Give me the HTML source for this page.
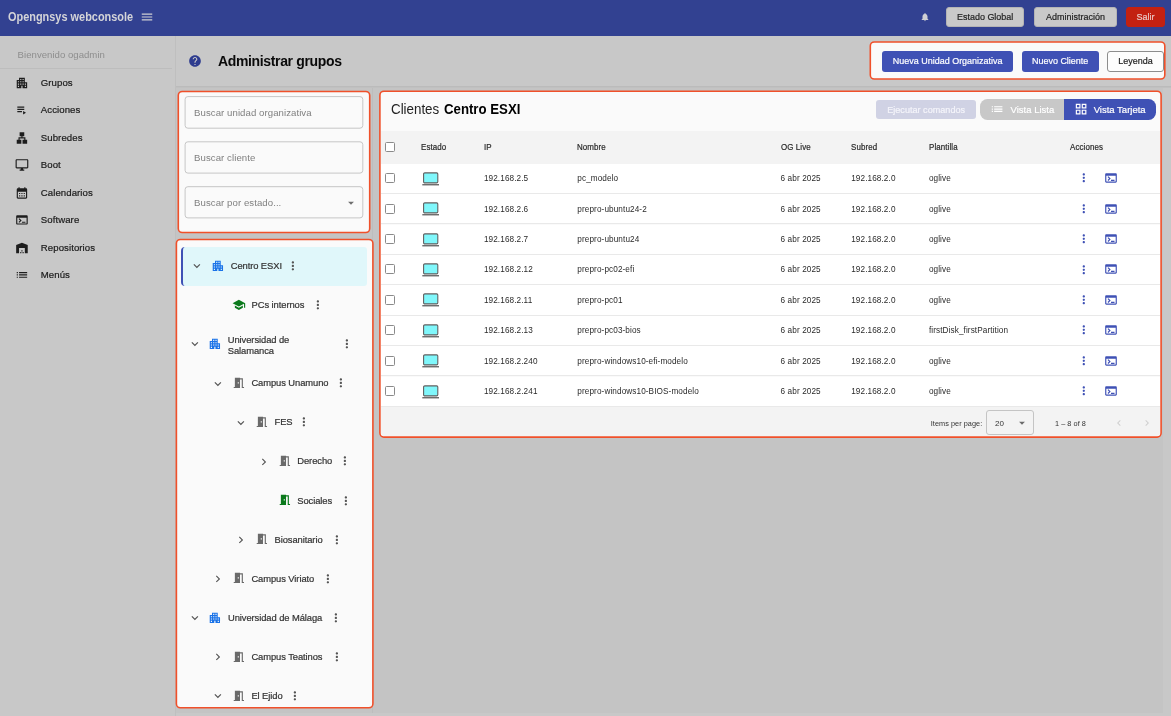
<!DOCTYPE html>
<html lang="es">
<head>
<meta charset="utf-8">
<title>Opengnsys webconsole</title>
<style>
*{box-sizing:border-box;margin:0;padding:0}
html,body{width:1171px;height:716px;overflow:hidden}
body{background:#c8c8c8;font-family:"Liberation Sans",sans-serif;color:#222;position:relative}
.abs{position:absolute}
svg{display:block;position:absolute}
.t{position:absolute;white-space:nowrap;line-height:1}
#hdr,#side,#main{will-change:transform}
#main{position:absolute;left:0;top:0;width:1171px;height:716px}
/* header */
#hdr{position:absolute;left:0;top:0;width:1171px;height:36px;background:#324191}
#hdr .title{left:8px;top:10.6px;font-size:12.4px;font-weight:bold;color:#d4d4d8;transform:scaleX(.882);transform-origin:0 50%}
.hbtn{position:absolute;top:7px;height:20px;border-radius:3px;background:#c9c9c9;border:1px solid #b4b4b4;color:#1e1e1e;font-size:9.6px;line-height:18px;text-align:center;white-space:nowrap}
.sq{display:inline-block;transform:scaleX(.935);-webkit-text-stroke:.2px currentColor}
/* sidebar */
#side{position:absolute;left:0;top:36px;width:176px;height:680px;background:#c8c8c8;border-right:1px solid #bfbfbf}
#side .welcome{left:17.6px;top:13.6px;font-size:9.6px;color:#8e8e8e;letter-spacing:.02px}
#side .div{position:absolute;left:0;top:32px;width:172px;height:1px;background:#bdbdbd}
#side .it{left:40.8px;font-size:9.6px;color:#1b1b1b;letter-spacing:.08px;-webkit-text-stroke:.2px #1b1b1b}
/* main */
.hl{position:absolute;border-radius:3px;overflow:hidden}
.pbtn{position:absolute;height:21px;border-radius:3px;background:#3f51b5;color:#fff;font-size:9.6px;line-height:20px;text-align:center;white-space:nowrap}
.ph{font-size:9.6px;color:#808080;letter-spacing:.07px}
/* tree */
.tr{position:absolute;font-size:9.4px;color:#333;line-height:10px;white-space:nowrap;letter-spacing:-.08px;-webkit-text-stroke:.2px #333}
/* table */
.row{position:absolute;left:0;width:780px;height:30.4px;background:#fff;border-bottom:1px solid #e9e9e9;font-size:8.2px;color:#2a2a2a}
.row span,.hrow span{position:absolute;top:11.5px;line-height:1;white-space:nowrap;letter-spacing:.1px}
.hrow span{-webkit-text-stroke:.2px #2a2a2a;transform:scaleX(.97);transform-origin:0 50%}
.hrow{position:absolute;left:0;top:39.1px;width:780px;height:32.6px;background:#f3f3f3;font-size:8.2px;color:#2a2a2a}
.cb{position:absolute;left:4px;width:10px;height:10px;border:1px solid #8a8a8a;border-radius:1.5px;background:#fff}
#tbl span,#tbl svg,#tbl>.t,#tbl>.abs,#tbl .pg>*{margin-left:.5px}
#tbl>.pg{margin-left:0}
</style>
</head>
<body>
<div id="hdr">
  <div class="t title">Opengnsys webconsole</div>
  <svg style="left:140px;top:10.2px" width="14" height="14" viewBox="0 0 24 24" fill="#d0d0d4"><path d="M3 18h18v-2H3v2zm0-5h18v-2H3v2zm0-7v2h18V6H3z"/></svg>
  <svg style="left:919.5px;top:11.7px" width="10" height="10" viewBox="0 0 24 24" fill="#d0d0d4"><path d="M12 22c1.1 0 2-.9 2-2h-4c0 1.1.89 2 2 2zm6-6v-5c0-3.07-1.64-5.64-4.5-6.32V4c0-.83-.67-1.5-1.5-1.5s-1.5.67-1.5 1.5v.68C7.63 5.36 6 7.92 6 11v5l-2 2v1h16v-1l-2-2z"/></svg>
  <div class="hbtn" style="left:946px;width:78px"><span class="sq">Estado Global</span></div>
  <div class="hbtn" style="left:1033.5px;width:83px"><span class="sq">Administración</span></div>
  <div class="hbtn" style="left:1126px;width:39px;background:#c32111;border-color:#c32111;color:#e9c9c6"><span class="sq">Salir</span></div>
</div>

<div id="side">
  <div class="t welcome">Bienvenido ogadmin</div>
  <div class="div"></div>
  <svg style="left:15.1px;top:39.5px" width="13.9" height="13.9" viewBox="0 0 24 24" fill="#1d1d1d"><path d="M17 11V3H7v4H3v14h8v-4h2v4h8V11h-4zM7 19H5v-2h2v2zm0-4H5v-2h2v2zm0-4H5V9h2v2zm4 4H9v-2h2v2zm0-4H9V9h2v2zm0-4H9V5h2v2zm4 8h-2v-2h2v2zm0-4h-2V9h2v2zm0-4h-2V5h2v2zm4 12h-2v-2h2v2zm0-4h-2v-2h2v2z"/></svg>
  <div class="t it" style="top:41.5px">Grupos</div>
  <svg style="left:15.1px;top:67.0px" width="13.9" height="13.9" viewBox="0 0 24 24" fill="#1d1d1d"><path d="M4 10h12v2H4zm0-4h12v2H4zm0 8h8v2H4zm10 0v6l5-3z"/></svg>
  <div class="t it" style="top:69.0px">Acciones</div>
  <svg style="left:15.1px;top:94.6px" width="13.9" height="13.9" viewBox="0 0 24 24" fill="#1d1d1d"><path d="M13 22h8v-7h-3v-4h-5V9h3V2H8v7h3v2H6v4H3v7h8v-7H8v-2h8v2h-3z"/></svg>
  <div class="t it" style="top:96.6px">Subredes</div>
  <svg style="left:15.1px;top:122.2px" width="13.9" height="13.9" viewBox="0 0 24 24" fill="#1d1d1d"><path d="M21 2H3c-1.1 0-2 .9-2 2v12c0 1.1.9 2 2 2h7v2H8v2h8v-2h-2v-2h7c1.1 0 2-.9 2-2V4c0-1.1-.9-2-2-2zm0 14H3V4h18v12z"/></svg>
  <div class="t it" style="top:124.2px">Boot</div>
  <svg style="left:15.1px;top:149.7px" width="13.9" height="13.9" viewBox="0 0 24 24" fill="#1d1d1d"><path d="M19 4h-1V2h-2v2H8V2H6v2H5c-1.11 0-1.99.9-1.99 2L3 20c0 1.1.89 2 2 2h14c1.1 0 2-.9 2-2V6c0-1.1-.9-2-2-2zm0 16H5V10h14v10zM9 14H7v-2h2v2zm4 0h-2v-2h2v2zm4 0h-2v-2h2v2zm-8 4H7v-2h2v2zm4 0h-2v-2h2v2zm4 0h-2v-2h2v2z"/></svg>
  <div class="t it" style="top:151.7px">Calendarios</div>
  <svg style="left:15.1px;top:177.2px" width="13.9" height="13.9" viewBox="0 0 24 24" fill="#1d1d1d"><path d="M20 4H4c-1.11 0-2 .9-2 2v12c0 1.1.89 2 2 2h16c1.1 0 2-.9 2-2V6c0-1.1-.89-2-2-2zm0 14H4V8h16v10zm-2-1h-6v-2h6v2zM7.5 17l-1.41-1.41L8.67 13l-2.59-2.59L7.5 9l4 4-4 4z"/></svg>
  <div class="t it" style="top:179.2px">Software</div>
  <svg style="left:15.1px;top:204.8px" width="13.9" height="13.9" viewBox="0 0 24 24" fill="#1d1d1d"><path d="M22 21V7L12 3 2 7v14h5v-9h10v9h5zm-11-2H9v2h2v-2zm2-3h-2v2h2v-2zm2 3h-2v2h2v-2z"/></svg>
  <div class="t it" style="top:206.8px">Repositorios</div>
  <svg style="left:15.1px;top:232.4px" width="13.9" height="13.9" viewBox="0 0 24 24" fill="#1d1d1d"><path d="M3 13h2v-2H3v2zm0 4h2v-2H3v2zm0-8h2V7H3v2zm4 4h14v-2H7v2zm0 4h14v-2H7v2zM7 7v2h14V7H7z"/></svg>
  <div class="t it" style="top:234.4px">Menús</div>
</div>

<div id="main">
  <div class="abs" style="left:176px;top:87px;width:987px;height:629px;background:#c4c4c4"></div>
  <div class="abs" style="left:176px;top:713px;width:995px;height:3px;background:#c8c8c8"></div>
  <div class="abs" style="left:372px;top:87px;width:1px;height:626px;background:#bdbdbd"></div>
  <svg style="left:0;top:0" width="1171" height="716" viewBox="0 0 1171 716"><rect x="870.3" y="42.0" width="294.5" height="37.0" rx="4" fill="#fafafa" stroke="#f0502a" stroke-width="1.6"/><rect x="178.3" y="91.5" width="191.4" height="141.0" rx="4" fill="#fafafa" stroke="#f0502a" stroke-width="1.6"/><rect x="176.4" y="239.5" width="196.5" height="468.3" rx="4" fill="#fafafa" stroke="#f0502a" stroke-width="1.6"/><rect x="379.9" y="91.2" width="781.2" height="345.9" rx="4" fill="#fafafa" stroke="#f0502a" stroke-width="1.6"/><rect x="185.1" y="96.6" width="177.7" height="31.6" rx="2.8" fill="#fafafa" stroke="#c6c6c6" stroke-width="1"/><rect x="185.1" y="141.8" width="177.7" height="31.3" rx="2.8" fill="#fafafa" stroke="#c6c6c6" stroke-width="1"/><rect x="185.1" y="186.7" width="177.7" height="31.2" rx="2.8" fill="#fafafa" stroke="#c6c6c6" stroke-width="1"/></svg>
  <!-- page header -->
  <svg style="left:188px;top:54px" width="14" height="14" viewBox="0 0 24 24" fill="#2e3c8f"><path d="M12 2C6.48 2 2 6.48 2 12s4.480 10 10 10 10-4.480 10-10S17.520 2 12 2zm1 17h-2v-2h2v2zm2.070-7.750l-.9.920C13.450 12.900 13 13.500 13 15h-2v-.5c0-1.100.450-2.100 1.170-2.830l1.240-1.260c.370-.360.590-.860.590-1.410 0-1.100-.9-2-2-2s-2 .9-2 2H8c0-2.210 1.790-4 4-4s4 1.790 4 4c0 .880-.360 1.680-.930 2.250z"/></svg>
  <div class="t" style="left:218px;top:54px;font-size:14px;font-weight:bold;color:#0a0a0a;letter-spacing:-.35px">Administrar grupos</div>
  <div class="abs" style="left:176px;top:86px;width:995px;height:1px;background:#bbb"></div><div class="abs" style="left:176px;top:87px;width:995px;height:1px;background:#c0c0c0"></div>

  <!-- top-right actions -->
  <div class="hl" style="left:871px;top:43px;width:293px;height:35px">
    <div class="pbtn" style="left:11px;top:8px;width:131px"><span class="sq">Nueva Unidad Organizativa</span></div>
    <div class="pbtn" style="left:151px;top:8px;width:77px"><span class="sq">Nuevo Cliente</span></div>
    <div class="pbtn" style="left:236px;top:8px;width:57px;background:#fdfdfd;border:1px solid #8d8d8d;color:#222;line-height:18px"><span class="sq">Leyenda</span></div>
  </div>

  <!-- search box -->
  <div class="t ph" style="left:194.1px;top:107.7px">Buscar unidad organizativa</div>
  <div class="t ph" style="left:194.1px;top:152.8px">Buscar cliente</div>
  <div class="t ph" style="left:194.1px;top:197.7px">Buscar por estado...</div>
  <svg style="left:344px;top:195.5px" width="14" height="14" viewBox="0 0 24 24" fill="#6e6e6e"><path d="M7 10l5 5 5-5z"/></svg>

  <!-- tree -->
  <div class="hl" id="tree" style="left:178px;top:240px;width:194px;height:467px">
    <div class="abs" style="left:3.2px;top:6.6px;width:185.4px;height:39.2px;background:#e0f7fa;border-left:2px solid #3f51b5;border-radius:4px 3px 3px 4px"></div>
    <svg style="left:12.4px;top:19.3px" width="13.75" height="13.75" viewBox="0 0 24 24" fill="#555"><path d="M16.59 8.59 12 13.17 7.41 8.59 6 10l6 6 6-6z"/></svg>
    <svg style="left:32.9px;top:18.9px" width="13.75" height="13.75" viewBox="0 0 24 24" fill="#1a73e8"><path d="M17 11V3H7v4H3v14h8v-4h2v4h8V11h-4zM7 19H5v-2h2v2zm0-4H5v-2h2v2zm0-4H5V9h2v2zm4 4H9v-2h2v2zm0-4H9V9h2v2zm0-4H9V5h2v2zm4 8h-2v-2h2v2zm0-4h-2V9h2v2zm0-4h-2V5h2v2zm4 12h-2v-2h2v2zm0-4h-2v-2h2v2z"/></svg>
    <div class="tr" style="left:52.7px;top:21.1px;">Centro ESXI</div>
    <svg style="left:108.4px;top:19.1px" width="13.75" height="13.75" viewBox="0 0 24 24" fill="#555"><path d="M12 8c1.100 0 2-.9 2-2s-.9-2-2-2-2 .9-2 2 .9 2 2 2zm0 2c-1.100 0-2 .9-2 2s.9 2 2 2 2-.9 2-2-.9-2-2-2zm0 6c-1.100 0-2 .9-2 2s.9 2 2 2 2-.9 2-2-.9-2-2-2z"/></svg>
    <svg style="left:53.9px;top:58.0px" width="13.75" height="13.75" viewBox="0 0 24 24" fill="#0b7a1c"><path d="M5 13.18v4L12 21l7-3.82v-4L12 17l-7-3.820zM12 3 1 9l11 6 9-4.910V17h2V9L12 3z"/></svg>
    <div class="tr" style="left:73.6px;top:60.2px;">PCs internos</div>
    <svg style="left:133.0px;top:58.2px" width="13.75" height="13.75" viewBox="0 0 24 24" fill="#555"><path d="M12 8c1.100 0 2-.9 2-2s-.9-2-2-2-2 .9-2 2 .9 2 2 2zm0 2c-1.100 0-2 .9-2 2s.9 2 2 2 2-.9 2-2-.9-2-2-2zm0 6c-1.100 0-2 .9-2 2s.9 2 2 2 2-.9 2-2-.9-2-2-2z"/></svg>
    <svg style="left:9.8px;top:97.4px" width="13.75" height="13.75" viewBox="0 0 24 24" fill="#555"><path d="M16.59 8.59 12 13.17 7.41 8.59 6 10l6 6 6-6z"/></svg>
    <svg style="left:30.2px;top:97.0px" width="13.75" height="13.75" viewBox="0 0 24 24" fill="#1a73e8"><path d="M17 11V3H7v4H3v14h8v-4h2v4h8V11h-4zM7 19H5v-2h2v2zm0-4H5v-2h2v2zm0-4H5V9h2v2zm4 4H9v-2h2v2zm0-4H9V9h2v2zm0-4H9V5h2v2zm4 8h-2v-2h2v2zm0-4h-2V9h2v2zm0-4h-2V5h2v2zm4 12h-2v-2h2v2zm0-4h-2v-2h2v2z"/></svg>
    <div class="tr" style="left:49.8px;top:93.6px;line-height:11px;">Universidad de<br>Salamanca</div>
    <svg style="left:161.8px;top:97.2px" width="13.75" height="13.75" viewBox="0 0 24 24" fill="#555"><path d="M12 8c1.100 0 2-.9 2-2s-.9-2-2-2-2 .9-2 2 .9 2 2 2zm0 2c-1.100 0-2 .9-2 2s.9 2 2 2 2-.9 2-2-.9-2-2-2zm0 6c-1.100 0-2 .9-2 2s.9 2 2 2 2-.9 2-2-.9-2-2-2z"/></svg>
    <svg style="left:33.1px;top:136.5px" width="13.75" height="13.75" viewBox="0 0 24 24" fill="#555"><path d="M16.59 8.59 12 13.17 7.41 8.59 6 10l6 6 6-6z"/></svg>
    <svg style="left:53.9px;top:136.1px" width="13.75" height="13.75" viewBox="0 0 24 24" fill="#6a6a6a"><path d="M14 6v15H3v-2h2V3h9v1h5v15h2v2h-4V6h-3zm-4 5v2h2v-2h-2z"/></svg>
    <div class="tr" style="left:73.4px;top:138.3px;">Campus Unamuno</div>
    <svg style="left:155.8px;top:136.3px" width="13.75" height="13.75" viewBox="0 0 24 24" fill="#555"><path d="M12 8c1.100 0 2-.9 2-2s-.9-2-2-2-2 .9-2 2 .9 2 2 2zm0 2c-1.100 0-2 .9-2 2s.9 2 2 2 2-.9 2-2-.9-2-2-2zm0 6c-1.100 0-2 .9-2 2s.9 2 2 2 2-.9 2-2-.9-2-2-2z"/></svg>
    <svg style="left:56.1px;top:175.6px" width="13.75" height="13.75" viewBox="0 0 24 24" fill="#555"><path d="M16.59 8.59 12 13.17 7.41 8.59 6 10l6 6 6-6z"/></svg>
    <svg style="left:77.0px;top:175.2px" width="13.75" height="13.75" viewBox="0 0 24 24" fill="#6a6a6a"><path d="M14 6v15H3v-2h2V3h9v1h5v15h2v2h-4V6h-3zm-4 5v2h2v-2h-2z"/></svg>
    <div class="tr" style="left:96.5px;top:177.3px;">FES</div>
    <svg style="left:118.8px;top:175.4px" width="13.75" height="13.75" viewBox="0 0 24 24" fill="#555"><path d="M12 8c1.100 0 2-.9 2-2s-.9-2-2-2-2 .9-2 2 .9 2 2 2zm0 2c-1.100 0-2 .9-2 2s.9 2 2 2 2-.9 2-2-.9-2-2-2zm0 6c-1.100 0-2 .9-2 2s.9 2 2 2 2-.9 2-2-.9-2-2-2z"/></svg>
    <svg style="left:79.1px;top:214.6px" width="13.75" height="13.75" viewBox="0 0 24 24" fill="#555"><path d="M10 6 8.59 7.41 13.17 12l-4.58 4.59L10 18l6-6z"/></svg>
    <svg style="left:100.1px;top:214.2px" width="13.75" height="13.75" viewBox="0 0 24 24" fill="#6a6a6a"><path d="M14 6v15H3v-2h2V3h9v1h5v15h2v2h-4V6h-3zm-4 5v2h2v-2h-2z"/></svg>
    <div class="tr" style="left:119.3px;top:216.4px;">Derecho</div>
    <svg style="left:160.1px;top:214.4px" width="13.75" height="13.75" viewBox="0 0 24 24" fill="#555"><path d="M12 8c1.100 0 2-.9 2-2s-.9-2-2-2-2 .9-2 2 .9 2 2 2zm0 2c-1.100 0-2 .9-2 2s.9 2 2 2 2-.9 2-2-.9-2-2-2zm0 6c-1.100 0-2 .9-2 2s.9 2 2 2 2-.9 2-2-.9-2-2-2z"/></svg>
    <svg style="left:100.1px;top:253.3px" width="13.75" height="13.75" viewBox="0 0 24 24" fill="#0b7a1c"><path d="M14 6v15H3v-2h2V3h9v1h5v15h2v2h-4V6h-3zm-4 5v2h2v-2h-2z"/></svg>
    <div class="tr" style="left:119.3px;top:255.5px;">Sociales</div>
    <svg style="left:161.1px;top:253.5px" width="13.75" height="13.75" viewBox="0 0 24 24" fill="#555"><path d="M12 8c1.100 0 2-.9 2-2s-.9-2-2-2-2 .9-2 2 .9 2 2 2zm0 2c-1.100 0-2 .9-2 2s.9 2 2 2 2-.9 2-2-.9-2-2-2zm0 6c-1.100 0-2 .9-2 2s.9 2 2 2 2-.9 2-2-.9-2-2-2z"/></svg>
    <svg style="left:56.1px;top:292.7px" width="13.75" height="13.75" viewBox="0 0 24 24" fill="#555"><path d="M10 6 8.59 7.41 13.17 12l-4.58 4.59L10 18l6-6z"/></svg>
    <svg style="left:77.0px;top:292.3px" width="13.75" height="13.75" viewBox="0 0 24 24" fill="#6a6a6a"><path d="M14 6v15H3v-2h2V3h9v1h5v15h2v2h-4V6h-3zm-4 5v2h2v-2h-2z"/></svg>
    <div class="tr" style="left:96.5px;top:294.5px;">Biosanitario</div>
    <svg style="left:152.1px;top:292.5px" width="13.75" height="13.75" viewBox="0 0 24 24" fill="#555"><path d="M12 8c1.100 0 2-.9 2-2s-.9-2-2-2-2 .9-2 2 .9 2 2 2zm0 2c-1.100 0-2 .9-2 2s.9 2 2 2 2-.9 2-2-.9-2-2-2zm0 6c-1.100 0-2 .9-2 2s.9 2 2 2 2-.9 2-2-.9-2-2-2z"/></svg>
    <svg style="left:33.1px;top:331.8px" width="13.75" height="13.75" viewBox="0 0 24 24" fill="#555"><path d="M10 6 8.59 7.41 13.17 12l-4.58 4.59L10 18l6-6z"/></svg>
    <svg style="left:53.9px;top:331.4px" width="13.75" height="13.75" viewBox="0 0 24 24" fill="#6a6a6a"><path d="M14 6v15H3v-2h2V3h9v1h5v15h2v2h-4V6h-3zm-4 5v2h2v-2h-2z"/></svg>
    <div class="tr" style="left:73.4px;top:333.6px;">Campus Viriato</div>
    <svg style="left:143.1px;top:331.6px" width="13.75" height="13.75" viewBox="0 0 24 24" fill="#555"><path d="M12 8c1.100 0 2-.9 2-2s-.9-2-2-2-2 .9-2 2 .9 2 2 2zm0 2c-1.100 0-2 .9-2 2s.9 2 2 2 2-.9 2-2-.9-2-2-2zm0 6c-1.100 0-2 .9-2 2s.9 2 2 2 2-.9 2-2-.9-2-2-2z"/></svg>
    <svg style="left:9.8px;top:370.9px" width="13.75" height="13.75" viewBox="0 0 24 24" fill="#555"><path d="M16.59 8.59 12 13.17 7.41 8.59 6 10l6 6 6-6z"/></svg>
    <svg style="left:30.2px;top:370.5px" width="13.75" height="13.75" viewBox="0 0 24 24" fill="#1a73e8"><path d="M17 11V3H7v4H3v14h8v-4h2v4h8V11h-4zM7 19H5v-2h2v2zm0-4H5v-2h2v2zm0-4H5V9h2v2zm4 4H9v-2h2v2zm0-4H9V9h2v2zm0-4H9V5h2v2zm4 8h-2v-2h2v2zm0-4h-2V9h2v2zm0-4h-2V5h2v2zm4 12h-2v-2h2v2zm0-4h-2v-2h2v2z"/></svg>
    <div class="tr" style="left:50.0px;top:372.6px;">Universidad de Málaga</div>
    <svg style="left:151.1px;top:370.7px" width="13.75" height="13.75" viewBox="0 0 24 24" fill="#555"><path d="M12 8c1.100 0 2-.9 2-2s-.9-2-2-2-2 .9-2 2 .9 2 2 2zm0 2c-1.100 0-2 .9-2 2s.9 2 2 2 2-.9 2-2-.9-2-2-2zm0 6c-1.100 0-2 .9-2 2s.9 2 2 2 2-.9 2-2-.9-2-2-2z"/></svg>
    <svg style="left:33.1px;top:409.9px" width="13.75" height="13.75" viewBox="0 0 24 24" fill="#555"><path d="M10 6 8.59 7.41 13.17 12l-4.58 4.59L10 18l6-6z"/></svg>
    <svg style="left:53.9px;top:409.5px" width="13.75" height="13.75" viewBox="0 0 24 24" fill="#6a6a6a"><path d="M14 6v15H3v-2h2V3h9v1h5v15h2v2h-4V6h-3zm-4 5v2h2v-2h-2z"/></svg>
    <div class="tr" style="left:73.4px;top:411.7px;">Campus Teatinos</div>
    <svg style="left:152.1px;top:409.7px" width="13.75" height="13.75" viewBox="0 0 24 24" fill="#555"><path d="M12 8c1.100 0 2-.9 2-2s-.9-2-2-2-2 .9-2 2 .9 2 2 2zm0 2c-1.100 0-2 .9-2 2s.9 2 2 2 2-.9 2-2-.9-2-2-2zm0 6c-1.100 0-2 .9-2 2s.9 2 2 2 2-.9 2-2-.9-2-2-2z"/></svg>
    <svg style="left:33.1px;top:449.0px" width="13.75" height="13.75" viewBox="0 0 24 24" fill="#555"><path d="M16.59 8.59 12 13.17 7.41 8.59 6 10l6 6 6-6z"/></svg>
    <svg style="left:53.9px;top:448.6px" width="13.75" height="13.75" viewBox="0 0 24 24" fill="#6a6a6a"><path d="M14 6v15H3v-2h2V3h9v1h5v15h2v2h-4V6h-3zm-4 5v2h2v-2h-2z"/></svg>
    <div class="tr" style="left:73.4px;top:450.8px;">El Ejido</div>
    <svg style="left:110.1px;top:448.8px" width="13.75" height="13.75" viewBox="0 0 24 24" fill="#555"><path d="M12 8c1.100 0 2-.9 2-2s-.9-2-2-2-2 .9-2 2 .9 2 2 2zm0 2c-1.100 0-2 .9-2 2s.9 2 2 2 2-.9 2-2-.9-2-2-2zm0 6c-1.100 0-2 .9-2 2s.9 2 2 2 2-.9 2-2-.9-2-2-2z"/></svg>
  </div>

  <!-- clients table -->
  <div class="hl" id="tbl" style="left:381px;top:92px;width:779.3px;height:344.3px">
    <div class="t" style="left:9.2px;top:9.6px;font-size:14px;color:#222;transform:scaleX(.953);transform-origin:0 50%">Clientes</div>
    <div class="t" style="left:62px;top:9.6px;font-size:14px;color:#000;font-weight:bold;transform:scaleX(.944);transform-origin:0 50%">Centro ESXI</div>
    <div class="abs" style="left:494.5px;top:7.6px;width:100px;height:19.8px;border-radius:3px;background:#d0d2e4;color:#f4f4fa;font-size:9.4px;line-height:20.6px;text-align:center"><span class="sq" style="transform:scaleX(.97)">Ejecutar comandos</span></div>
    <div class="abs" style="left:598.8px;top:6.8px;width:84px;height:20.8px;border-radius:7.5px 0 0 7.5px;background:#c8c8c8"></div>
    <div class="abs" style="left:682.5px;top:6.8px;width:91.6px;height:20.8px;border-radius:0 7.5px 7.5px 0;background:#3f51b5"></div>
    <svg style="left:608.9px;top:10.2px" width="14.2" height="14.2" viewBox="0 0 24 24" fill="#fff"><path d="M3 13h2v-2H3v2zm0 4h2v-2H3v2zm0-8h2V7H3v2zm4 4h14v-2H7v2zm0 4h14v-2H7v2zM7 7v2h14V7H7z"/></svg>
    <div class="t" style="left:629.1px;top:12.9px;font-size:9.5px;color:#fff;-webkit-text-stroke:.2px #fff">Vista Lista</div>
    <svg style="left:692.6px;top:9.8px" width="14.2" height="14.2" viewBox="0 0 24 24" fill="#fff"><path d="M3 3v8h8V3H3zm6 6H5V5h4v4zm-6 4v8h8v-8H3zm6 6H5v-4h4v4zm4-16v8h8V3h-8zm6 6h-4V5h4v4zm-6 4v8h8v-8h-8zm6 6h-4v-4h4v4z"/></svg>
    <div class="t" style="left:712.2px;top:12.9px;font-size:9.5px;color:#fff;-webkit-text-stroke:.2px #fff">Vista Tarjeta</div>
    <div class="hrow">
      <div class="cb" style="top:11px"></div>
      <span style="left:39.3px;top:13.1px">Estado</span>
      <span style="left:102.4px;top:13.1px">IP</span>
      <span style="left:195.8px;top:13.1px">Nombre</span>
      <span style="left:399.1px;top:13.1px">OG Live</span>
      <span style="left:469.7px;top:13.1px">Subred</span>
      <span style="left:547.4px;top:13.1px">Plantilla</span>
      <span style="left:688.2px;top:13.1px">Acciones</span>
    </div>
    <div class="row" style="top:71.7px">
      <div class="cb" style="top:9.6px"></div>
      <svg style="left:40.0px;top:8.2px" width="17.5" height="14" viewBox="0 0 17.5 14"><rect x="1.6" y="0.9" width="14.2" height="10" rx="1.2" fill="#80f7fb" stroke="#5f5f5f" stroke-width="1.1"/><rect x="0.3" y="12.1" width="16.8" height="1.3" fill="#5f5f5f"/></svg>
      <span style="left:102.4px">192.168.2.5</span>
      <span style="left:195.8px">pc_modelo</span>
      <span style="left:399.1px">6 abr 2025</span>
      <span style="left:469.7px">192.168.2.0</span>
      <span style="left:547.4px">oglive</span>
      <svg style="left:695.8px;top:7.8px;margin-left:-.3px" width="13.6" height="13.6" viewBox="0 0 24 24" fill="#3f51b5"><path d="M12 8c1.100 0 2-.9 2-2s-.9-2-2-2-2 .9-2 2 .9 2 2 2zm0 2c-1.100 0-2 .9-2 2s.9 2 2 2 2-.9 2-2-.9-2-2-2zm0 6c-1.100 0-2 .9-2 2s.9 2 2 2 2-.9 2-2-.9-2-2-2z"/></svg>
      <svg style="left:722.7px;top:7.5px" width="14" height="14" viewBox="0 0 24 24" fill="#3f51b5"><path d="M20 4H4c-1.110 0-2 .9-2 2v12c0 1.100.890 2 2 2h16c1.100 0 2-.9 2-2V6c0-1.100-.890-2-2-2zm0 14H4V8h16v10zm-2-1h-6v-2h6v2zM7.500 17l-1.410-1.410L8.670 13l-2.590-2.590L7.500 9l4 4-4 4z"/></svg>
    </div>
    <div class="row" style="top:102.1px">
      <div class="cb" style="top:9.6px"></div>
      <svg style="left:40.0px;top:8.2px" width="17.5" height="14" viewBox="0 0 17.5 14"><rect x="1.6" y="0.9" width="14.2" height="10" rx="1.2" fill="#80f7fb" stroke="#5f5f5f" stroke-width="1.1"/><rect x="0.3" y="12.1" width="16.8" height="1.3" fill="#5f5f5f"/></svg>
      <span style="left:102.4px">192.168.2.6</span>
      <span style="left:195.8px">prepro-ubuntu24-2</span>
      <span style="left:399.1px">6 abr 2025</span>
      <span style="left:469.7px">192.168.2.0</span>
      <span style="left:547.4px">oglive</span>
      <svg style="left:695.8px;top:7.8px;margin-left:-.3px" width="13.6" height="13.6" viewBox="0 0 24 24" fill="#3f51b5"><path d="M12 8c1.100 0 2-.9 2-2s-.9-2-2-2-2 .9-2 2 .9 2 2 2zm0 2c-1.100 0-2 .9-2 2s.9 2 2 2 2-.9 2-2-.9-2-2-2zm0 6c-1.100 0-2 .9-2 2s.9 2 2 2 2-.9 2-2-.9-2-2-2z"/></svg>
      <svg style="left:722.7px;top:7.5px" width="14" height="14" viewBox="0 0 24 24" fill="#3f51b5"><path d="M20 4H4c-1.110 0-2 .9-2 2v12c0 1.100.890 2 2 2h16c1.100 0 2-.9 2-2V6c0-1.100-.890-2-2-2zm0 14H4V8h16v10zm-2-1h-6v-2h6v2zM7.500 17l-1.410-1.410L8.670 13l-2.590-2.590L7.500 9l4 4-4 4z"/></svg>
    </div>
    <div class="row" style="top:132.5px">
      <div class="cb" style="top:9.6px"></div>
      <svg style="left:40.0px;top:8.2px" width="17.5" height="14" viewBox="0 0 17.5 14"><rect x="1.6" y="0.9" width="14.2" height="10" rx="1.2" fill="#80f7fb" stroke="#5f5f5f" stroke-width="1.1"/><rect x="0.3" y="12.1" width="16.8" height="1.3" fill="#5f5f5f"/></svg>
      <span style="left:102.4px">192.168.2.7</span>
      <span style="left:195.8px">prepro-ubuntu24</span>
      <span style="left:399.1px">6 abr 2025</span>
      <span style="left:469.7px">192.168.2.0</span>
      <span style="left:547.4px">oglive</span>
      <svg style="left:695.8px;top:7.8px;margin-left:-.3px" width="13.6" height="13.6" viewBox="0 0 24 24" fill="#3f51b5"><path d="M12 8c1.100 0 2-.9 2-2s-.9-2-2-2-2 .9-2 2 .9 2 2 2zm0 2c-1.100 0-2 .9-2 2s.9 2 2 2 2-.9 2-2-.9-2-2-2zm0 6c-1.100 0-2 .9-2 2s.9 2 2 2 2-.9 2-2-.9-2-2-2z"/></svg>
      <svg style="left:722.7px;top:7.5px" width="14" height="14" viewBox="0 0 24 24" fill="#3f51b5"><path d="M20 4H4c-1.110 0-2 .9-2 2v12c0 1.100.890 2 2 2h16c1.100 0 2-.9 2-2V6c0-1.100-.890-2-2-2zm0 14H4V8h16v10zm-2-1h-6v-2h6v2zM7.500 17l-1.410-1.410L8.670 13l-2.590-2.590L7.500 9l4 4-4 4z"/></svg>
    </div>
    <div class="row" style="top:162.9px">
      <div class="cb" style="top:9.6px"></div>
      <svg style="left:40.0px;top:8.2px" width="17.5" height="14" viewBox="0 0 17.5 14"><rect x="1.6" y="0.9" width="14.2" height="10" rx="1.2" fill="#80f7fb" stroke="#5f5f5f" stroke-width="1.1"/><rect x="0.3" y="12.1" width="16.8" height="1.3" fill="#5f5f5f"/></svg>
      <span style="left:102.4px">192.168.2.12</span>
      <span style="left:195.8px">prepro-pc02-efi</span>
      <span style="left:399.1px">6 abr 2025</span>
      <span style="left:469.7px">192.168.2.0</span>
      <span style="left:547.4px">oglive</span>
      <svg style="left:695.8px;top:7.8px;margin-left:-.3px" width="13.6" height="13.6" viewBox="0 0 24 24" fill="#3f51b5"><path d="M12 8c1.100 0 2-.9 2-2s-.9-2-2-2-2 .9-2 2 .9 2 2 2zm0 2c-1.100 0-2 .9-2 2s.9 2 2 2 2-.9 2-2-.9-2-2-2zm0 6c-1.100 0-2 .9-2 2s.9 2 2 2 2-.9 2-2-.9-2-2-2z"/></svg>
      <svg style="left:722.7px;top:7.5px" width="14" height="14" viewBox="0 0 24 24" fill="#3f51b5"><path d="M20 4H4c-1.110 0-2 .9-2 2v12c0 1.100.890 2 2 2h16c1.100 0 2-.9 2-2V6c0-1.100-.890-2-2-2zm0 14H4V8h16v10zm-2-1h-6v-2h6v2zM7.500 17l-1.410-1.410L8.670 13l-2.590-2.590L7.500 9l4 4-4 4z"/></svg>
    </div>
    <div class="row" style="top:193.3px">
      <div class="cb" style="top:9.6px"></div>
      <svg style="left:40.0px;top:8.2px" width="17.5" height="14" viewBox="0 0 17.5 14"><rect x="1.6" y="0.9" width="14.2" height="10" rx="1.2" fill="#80f7fb" stroke="#5f5f5f" stroke-width="1.1"/><rect x="0.3" y="12.1" width="16.8" height="1.3" fill="#5f5f5f"/></svg>
      <span style="left:102.4px">192.168.2.11</span>
      <span style="left:195.8px">prepro-pc01</span>
      <span style="left:399.1px">6 abr 2025</span>
      <span style="left:469.7px">192.168.2.0</span>
      <span style="left:547.4px">oglive</span>
      <svg style="left:695.8px;top:7.8px;margin-left:-.3px" width="13.6" height="13.6" viewBox="0 0 24 24" fill="#3f51b5"><path d="M12 8c1.100 0 2-.9 2-2s-.9-2-2-2-2 .9-2 2 .9 2 2 2zm0 2c-1.100 0-2 .9-2 2s.9 2 2 2 2-.9 2-2-.9-2-2-2zm0 6c-1.100 0-2 .9-2 2s.9 2 2 2 2-.9 2-2-.9-2-2-2z"/></svg>
      <svg style="left:722.7px;top:7.5px" width="14" height="14" viewBox="0 0 24 24" fill="#3f51b5"><path d="M20 4H4c-1.110 0-2 .9-2 2v12c0 1.100.890 2 2 2h16c1.100 0 2-.9 2-2V6c0-1.100-.890-2-2-2zm0 14H4V8h16v10zm-2-1h-6v-2h6v2zM7.500 17l-1.410-1.410L8.670 13l-2.590-2.590L7.500 9l4 4-4 4z"/></svg>
    </div>
    <div class="row" style="top:223.7px">
      <div class="cb" style="top:9.6px"></div>
      <svg style="left:40.0px;top:8.2px" width="17.5" height="14" viewBox="0 0 17.5 14"><rect x="1.6" y="0.9" width="14.2" height="10" rx="1.2" fill="#80f7fb" stroke="#5f5f5f" stroke-width="1.1"/><rect x="0.3" y="12.1" width="16.8" height="1.3" fill="#5f5f5f"/></svg>
      <span style="left:102.4px">192.168.2.13</span>
      <span style="left:195.8px">prepro-pc03-bios</span>
      <span style="left:399.1px">6 abr 2025</span>
      <span style="left:469.7px">192.168.2.0</span>
      <span style="left:547.4px">firstDisk_firstPartition</span>
      <svg style="left:695.8px;top:7.8px;margin-left:-.3px" width="13.6" height="13.6" viewBox="0 0 24 24" fill="#3f51b5"><path d="M12 8c1.100 0 2-.9 2-2s-.9-2-2-2-2 .9-2 2 .9 2 2 2zm0 2c-1.100 0-2 .9-2 2s.9 2 2 2 2-.9 2-2-.9-2-2-2zm0 6c-1.100 0-2 .9-2 2s.9 2 2 2 2-.9 2-2-.9-2-2-2z"/></svg>
      <svg style="left:722.7px;top:7.5px" width="14" height="14" viewBox="0 0 24 24" fill="#3f51b5"><path d="M20 4H4c-1.110 0-2 .9-2 2v12c0 1.100.890 2 2 2h16c1.100 0 2-.9 2-2V6c0-1.100-.890-2-2-2zm0 14H4V8h16v10zm-2-1h-6v-2h6v2zM7.500 17l-1.410-1.410L8.670 13l-2.590-2.590L7.500 9l4 4-4 4z"/></svg>
    </div>
    <div class="row" style="top:254.1px">
      <div class="cb" style="top:9.6px"></div>
      <svg style="left:40.0px;top:8.2px" width="17.5" height="14" viewBox="0 0 17.5 14"><rect x="1.6" y="0.9" width="14.2" height="10" rx="1.2" fill="#80f7fb" stroke="#5f5f5f" stroke-width="1.1"/><rect x="0.3" y="12.1" width="16.8" height="1.3" fill="#5f5f5f"/></svg>
      <span style="left:102.4px">192.168.2.240</span>
      <span style="left:195.8px">prepro-windows10-efi-modelo</span>
      <span style="left:399.1px">6 abr 2025</span>
      <span style="left:469.7px">192.168.2.0</span>
      <span style="left:547.4px">oglive</span>
      <svg style="left:695.8px;top:7.8px;margin-left:-.3px" width="13.6" height="13.6" viewBox="0 0 24 24" fill="#3f51b5"><path d="M12 8c1.100 0 2-.9 2-2s-.9-2-2-2-2 .9-2 2 .9 2 2 2zm0 2c-1.100 0-2 .9-2 2s.9 2 2 2 2-.9 2-2-.9-2-2-2zm0 6c-1.100 0-2 .9-2 2s.9 2 2 2 2-.9 2-2-.9-2-2-2z"/></svg>
      <svg style="left:722.7px;top:7.5px" width="14" height="14" viewBox="0 0 24 24" fill="#3f51b5"><path d="M20 4H4c-1.110 0-2 .9-2 2v12c0 1.100.890 2 2 2h16c1.100 0 2-.9 2-2V6c0-1.100-.890-2-2-2zm0 14H4V8h16v10zm-2-1h-6v-2h6v2zM7.500 17l-1.410-1.410L8.670 13l-2.590-2.590L7.500 9l4 4-4 4z"/></svg>
    </div>
    <div class="row" style="top:284.5px">
      <div class="cb" style="top:9.6px"></div>
      <svg style="left:40.0px;top:8.2px" width="17.5" height="14" viewBox="0 0 17.5 14"><rect x="1.6" y="0.9" width="14.2" height="10" rx="1.2" fill="#80f7fb" stroke="#5f5f5f" stroke-width="1.1"/><rect x="0.3" y="12.1" width="16.8" height="1.3" fill="#5f5f5f"/></svg>
      <span style="left:102.4px">192.168.2.241</span>
      <span style="left:195.8px">prepro-windows10-BIOS-modelo</span>
      <span style="left:399.1px">6 abr 2025</span>
      <span style="left:469.7px">192.168.2.0</span>
      <span style="left:547.4px">oglive</span>
      <svg style="left:695.8px;top:7.8px;margin-left:-.3px" width="13.6" height="13.6" viewBox="0 0 24 24" fill="#3f51b5"><path d="M12 8c1.100 0 2-.9 2-2s-.9-2-2-2-2 .9-2 2 .9 2 2 2zm0 2c-1.100 0-2 .9-2 2s.9 2 2 2 2-.9 2-2-.9-2-2-2zm0 6c-1.100 0-2 .9-2 2s.9 2 2 2 2-.9 2-2-.9-2-2-2z"/></svg>
      <svg style="left:722.7px;top:7.5px" width="14" height="14" viewBox="0 0 24 24" fill="#3f51b5"><path d="M20 4H4c-1.110 0-2 .9-2 2v12c0 1.100.890 2 2 2h16c1.100 0 2-.9 2-2V6c0-1.100-.890-2-2-2zm0 14H4V8h16v10zm-2-1h-6v-2h6v2zM7.500 17l-1.410-1.410L8.670 13l-2.590-2.590L7.500 9l4 4-4 4z"/></svg>
    </div>
    <div class="abs pg" style="left:0;top:314.9px;width:780px;height:40px;background:#f3f3f3;font-size:7.3px;color:#333">
      <div class="t" style="left:549.3px;top:13.2px;letter-spacing:.05px">Items per page:</div>
      <div class="abs" style="left:604.6px;top:3.6px;width:48.2px;height:24.4px;border:1px solid #c4c4c4;border-radius:3px"></div>
      <div class="t" style="left:613.5px;top:12.8px;font-size:8px">20</div>
      <svg style="left:633.7px;top:9.3px" width="14" height="14" viewBox="0 0 24 24" fill="#6a6a6a"><path d="M7 10l5 5 5-5z"/></svg>
      <div class="t" style="left:673.5px;top:13.2px;letter-spacing:.05px">1 – 8 of 8</div>
      <svg style="left:731.2px;top:10.5px" width="12" height="12" viewBox="0 0 24 24" fill="#cfcfcf"><path d="M15.41 7.41 14 6l-6 6 6 6 1.41-1.41L10.83 12z"/></svg>
      <svg style="left:759.0px;top:10.5px" width="12" height="12" viewBox="0 0 24 24" fill="#cfcfcf"><path d="M10 6 8.59 7.41 13.17 12l-4.58 4.59L10 18l6-6z"/></svg>
    </div>
  </div>
</div>
</body>
</html>
